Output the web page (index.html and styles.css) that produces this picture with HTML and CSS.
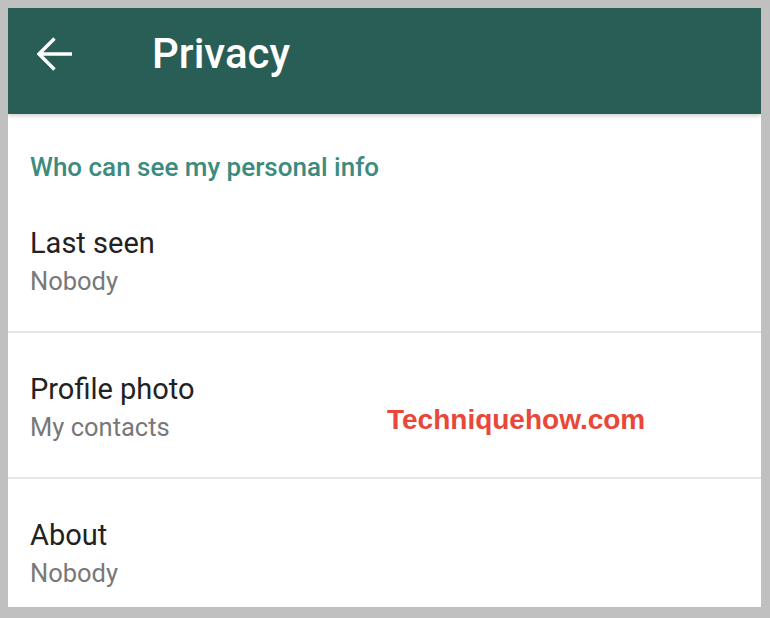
FILE: index.html
```html
<!DOCTYPE html>
<html lang="en">
<head>
    <meta charset="UTF-8">
    <title>Privacy</title>
    <link rel="stylesheet" href="styles.css">
</head>
<body>
    <div class="screen">
        <header class="app-bar">
            <svg class="back" width="36" height="34" viewBox="0 0 36 34">
                <path d="M2 17H35M17.5 1.5L2 17L17.5 32.5" fill="none" stroke="#fff" stroke-width="3.4"/>
            </svg>
            <h1>Privacy</h1>
        </header>

        <section class="settings">
            <h2>Who can see my personal info</h2>
            <div class="row first">
                <div class="row-title">Last seen</div>
                <div class="row-value">Nobody</div>
            </div>
            <div class="row">
                <div class="row-title">Profile photo</div>
                <div class="row-value">My contacts</div>
            </div>
            <div class="row">
                <div class="row-title">About</div>
                <div class="row-value">Nobody</div>
            </div>
            <div class="watermark">Techniquehow.com</div>
        </section>
    </div>
</body>
</html>
```

FILE: styles.css
```css
html, body {
    margin: 0;
    padding: 0;
}
body {
    background-color: #c0c0c0;
    font-family: Roboto, "Noto Sans", sans-serif;
}
.screen {
    margin: 8px 9px 11px 8px;
    height: 599px;
    background-color: #fff;
    overflow: hidden;
}
.app-bar {
    height: 106px;
    background-color: #285e55;
    display: flex;
    align-items: flex-start;
    box-shadow: 0 2px 4px rgba(0,0,0,0.18);
    position: relative;
    z-index: 1;
}
.back {
    margin: 29px 0 0 29px;
    flex: none;
}
h1 {
    margin: 21px 0 0 79px;
    color: #fff;
    font-size: 42px;
    font-weight: 500;
    line-height: 50px;
}
.settings {
    position: relative;
    padding-top: 37px;
}
h2 {
    margin: 0 0 4px 22px;
    color: #3b8b7e;
    font-size: 26px;
    font-weight: 500;
    line-height: 32px;
}
.row {
    padding: 38px 22px 34px;
    display: flex;
    flex-direction: column;
    gap: 4px;
    border-top: 2px solid #e6e6e6;
}
.row.first {
    border-top: none;
}
.row-title {
    color: #222;
    font-size: 29px;
    line-height: 36px;
}
.row-value {
    color: #787878;
    font-size: 25.5px;
    line-height: 32px;
}
.watermark {
    position: absolute;
    left: 379px;
    top: 290px;
    color: #e8473a;
    font-family: "Liberation Sans", Arial, sans-serif;
    font-weight: bold;
    font-size: 28px;
    line-height: 32px;
}
```
